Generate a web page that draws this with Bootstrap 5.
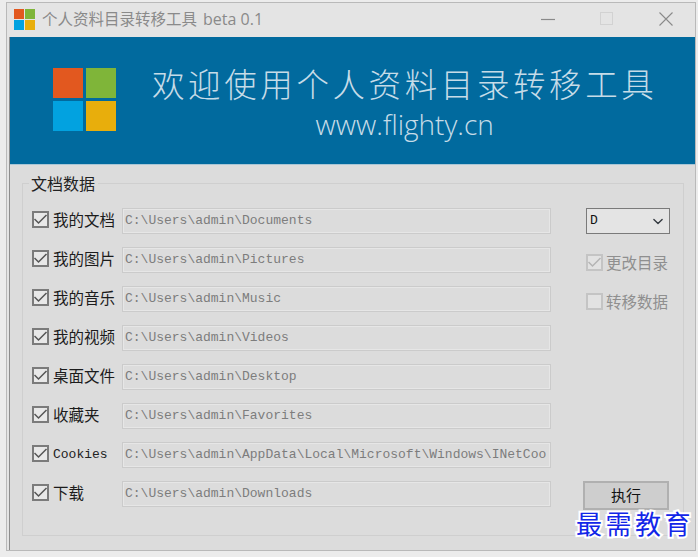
<!DOCTYPE html>
<html lang="zh-CN">
<head>
  <meta charset="UTF-8">
  <title>个人资料目录转移工具 beta 0.1</title>
  <link href="https://cdn.jsdelivr.net/npm/bootstrap@5.3.0/dist/css/bootstrap.min.css" rel="stylesheet">
  <style>
    html, body { height: 100%; }
    body { background: #ececec; padding: 2px 2px 5px 6px; font-family: "Noto Sans CJK SC", sans-serif; overflow: hidden; }
    .app-window { height: 549px; width: 690px; border: 1px solid #b9b9b9; background: #e4e4e4; position: relative; }
    .title-bar { height: 34px; padding-left: 7px; padding-bottom: 2px; color: #8a8a8a; font-size: 15.5px; line-height: 1; }
    .title-latin { font-family: "Open Sans", sans-serif; font-size: 16px; margin-left: 6px; }
    .win-btn { width: 59px; height: 34px; }
    .client { margin-left: 2px; border-left: 1px solid #8d8d8d; background: #dcdcdc; height: 513px; position: relative; }
    .banner { height: 128px; background: #016a9e; border-bottom: 1px solid #a9c6d6; padding-left: 43px; color: #c6dce8; }
    .logo-grid { display: grid; grid-template-columns: 30px 30px; grid-auto-rows: 30px; gap: 3px; width: 63px; }
    .banner .logo-grid { margin-top: -3px; }
    .small-logo { grid-template-columns: 10px 10px; grid-auto-rows: 10px; gap: 1px; width: 21px; margin-right: 7px; }
    .tile-red { background: #e2581f; }
    .tile-green { background: #7fb539; }
    .tile-blue { background: #02a2e0; }
    .tile-yellow { background: #e8ae0c; }
    .banner-text { margin-left: 36px; padding-top: 4px; text-align: center; }
    .banner-title { font-size: 32.5px; font-weight: 300; letter-spacing: 3.6px; line-height: 40px; white-space: nowrap; }
    .banner-url { font-family: "Open Sans", sans-serif; font-weight: 300; font-size: 28px; line-height: 36px; margin-top: 3px; }
    .data-group { margin: 9px 11px 0 12px; padding: 16px 10px 28px 9px; border: 1px solid #cfcfcf; height: 362px; min-width: 0; }
    .data-group legend { float: none; width: auto; margin: 0 0 0 -3px; padding: 0 3px 0 2px; font-size: 16px; line-height: 18px; color: #222; }
    .path-row { height: 26px; margin-bottom: 13px; }
    .path-row:last-child { margin-bottom: 0; }
    .form-check-input.square-check { width: 17px; height: 17px; margin: 0; flex: none; border: 2px solid #7b7b7b; border-radius: 0; background-color: #e8e8e8; box-shadow: none; }
    .path-row .form-check-input.square-check { margin-bottom: 3px; }
    .form-check-input.square-check:checked { background-color: #e8e8e8; border-color: #7b7b7b; background-image: url("data:image/svg+xml,%3csvg xmlns='http://www.w3.org/2000/svg' viewBox='0 0 17 17'%3e%3cpath fill='none' stroke='%23555' stroke-width='1.5' d='M2.5 8l4 4 8-8'/%3e%3c/svg%3e"); background-size: 17px 17px; background-position: center; }
    .form-check-input.square-check:disabled { opacity: 1; border-color: #c4c4c4; background-color: #e2e2e2; }
    .form-check-input.square-check:checked:disabled { background-image: url("data:image/svg+xml,%3csvg xmlns='http://www.w3.org/2000/svg' viewBox='0 0 17 17'%3e%3cpath fill='none' stroke='%23b4b4b4' stroke-width='1.5' d='M2.5 8l4 4 8-8'/%3e%3c/svg%3e"); }
    .path-label { width: 73px; flex: none; padding: 0 0 4px 4px; font-size: 15.5px; line-height: 20px; color: #1c1c1c; white-space: nowrap; }
    .path-label.mono-label { padding-bottom: 0; font-family: "Liberation Mono", monospace; font-size: 13px; color: #222; }
    .form-control.path-input { width: 429px; height: 26px; padding: 0 3px 1px 2px; border: 1px solid #cbcbcb; border-radius: 0; background: #dcdcdc; box-shadow: inset 0 0 0 1px #e6e6e6; font-family: "Liberation Mono", monospace; font-size: 13px; line-height: 22px; color: #7d7d7d; opacity: 1; white-space: nowrap; }
    .side-col { width: 87px; margin-left: 32px; }
    .form-select.drive-select { width: 84px; height: 26px; margin-left: 3px; padding: 0 0 1px 3px; border: 1px solid #7a7a7a; border-radius: 0; background-color: #e4e4e4; background-position: right 4px center; background-size: 14px 11px; font-family: "Liberation Mono", monospace; font-size: 13px; color: #111; box-shadow: none; }
    .side-check { margin: 20px 0 0 3px; height: 17px; }
    .side-check + .side-check { margin-top: 22px; }
    .side-label { padding-left: 3px; font-size: 15.5px; line-height: 17px; color: #8f8f8f; white-space: nowrap; }
    .btn.run-btn { width: 86px; height: 29px; padding: 0 0 2px 0; border: 2px solid #b0b0b0; border-radius: 0; background: #cecece; color: #111; font-size: 15px; line-height: 22px; }
    .side-col .run-btn { margin-top: auto; margin-bottom: -3px; }
    .watermark { position: absolute; right: 1px; bottom: 12px; font-size: 26px; font-weight: 400; letter-spacing: 3.5px; line-height: 30px; color: #1226e8; -webkit-text-stroke: 4px #fff; paint-order: stroke fill; white-space: nowrap; }
  </style>
</head>
<body>

<div class="app-window">
  <div class="title-bar d-flex align-items-center">
    <div class="logo-grid small-logo">
      <div class="tile-red"></div><div class="tile-green"></div>
      <div class="tile-blue"></div><div class="tile-yellow"></div>
    </div>
    <span>个人资料目录转移工具</span><span class="title-latin">beta 0.1</span>
    <div class="ms-auto d-flex">
      <div class="win-btn d-flex align-items-center justify-content-center">
        <svg width="14" height="14" viewBox="0 0 14 14"><path d="M0 7.500h14" stroke="#8a8a8a" stroke-width="1.2"/></svg>
      </div>
      <div class="win-btn d-flex align-items-center justify-content-center">
        <svg width="14" height="14" viewBox="0 0 14 14"><rect x=".5" y=".5" width="12" height="12" fill="none" stroke="#d2d2d2"/></svg>
      </div>
      <div class="win-btn d-flex align-items-center justify-content-center">
        <svg width="14" height="14" viewBox="0 0 14 14"><path d="M.5.5l13 13M13.500.5l-13 13" stroke="#8a8a8a" stroke-width="1.1"/></svg>
      </div>
    </div>
  </div>

  <div class="client">
    <div class="banner d-flex align-items-center">
      <div class="logo-grid">
        <div class="tile-red"></div><div class="tile-green"></div>
        <div class="tile-blue"></div><div class="tile-yellow"></div>
      </div>
      <div class="banner-text">
        <div class="banner-title">欢迎使用个人资料目录转移工具</div>
        <div class="banner-url">www.flighty.cn</div>
      </div>
    </div>

    <fieldset class="data-group">
      <legend>文档数据</legend>
      <div class="d-flex h-100">
        <div id="rows"></div>
        <div class="side-col d-flex flex-column">
          <select class="form-select drive-select"><option>D</option></select>
          <div class="side-check d-flex align-items-center">
            <input class="form-check-input square-check" type="checkbox" checked disabled>
            <span class="side-label">更改目录</span>
          </div>
          <div class="side-check d-flex align-items-center">
            <input class="form-check-input square-check" type="checkbox" disabled>
            <span class="side-label">转移数据</span>
          </div>
          <button type="button" class="btn run-btn">执行</button>
        </div>
      </div>
    </fieldset>

    <div class="watermark">最需教育</div>
  </div>
</div>

<script src="https://cdn.jsdelivr.net/npm/bootstrap@5.3.0/dist/js/bootstrap.bundle.min.js"></script>
<script>
const filas = [
  ['我的文档', 'C:\\Users\\admin\\Documents'],
  ['我的图片', 'C:\\Users\\admin\\Pictures'],
  ['我的音乐', 'C:\\Users\\admin\\Music'],
  ['我的视频', 'C:\\Users\\admin\\Videos'],
  ['桌面文件', 'C:\\Users\\admin\\Desktop'],
  ['收藏夹', 'C:\\Users\\admin\\Favorites'],
  ['Cookies', 'C:\\Users\\admin\\AppData\\Local\\Microsoft\\Windows\\INetCookies'],
  ['下载', 'C:\\Users\\admin\\Downloads']
];
const cont = document.getElementById('rows');
filas.forEach(f => {
  const fila = document.createElement('div');
  fila.className = 'path-row d-flex align-items-center';
  const mono = f[0] === 'Cookies' ? ' mono-label' : '';
  fila.innerHTML = '<input class="form-check-input square-check" type="checkbox" checked>' +
    '<span class="path-label' + mono + '">' + f[0] + '</span>' +
    '<input class="form-control path-input" type="text" readonly value="' + f[1] + '">';
  cont.appendChild(fila);
});
</script>

</body>
</html>
